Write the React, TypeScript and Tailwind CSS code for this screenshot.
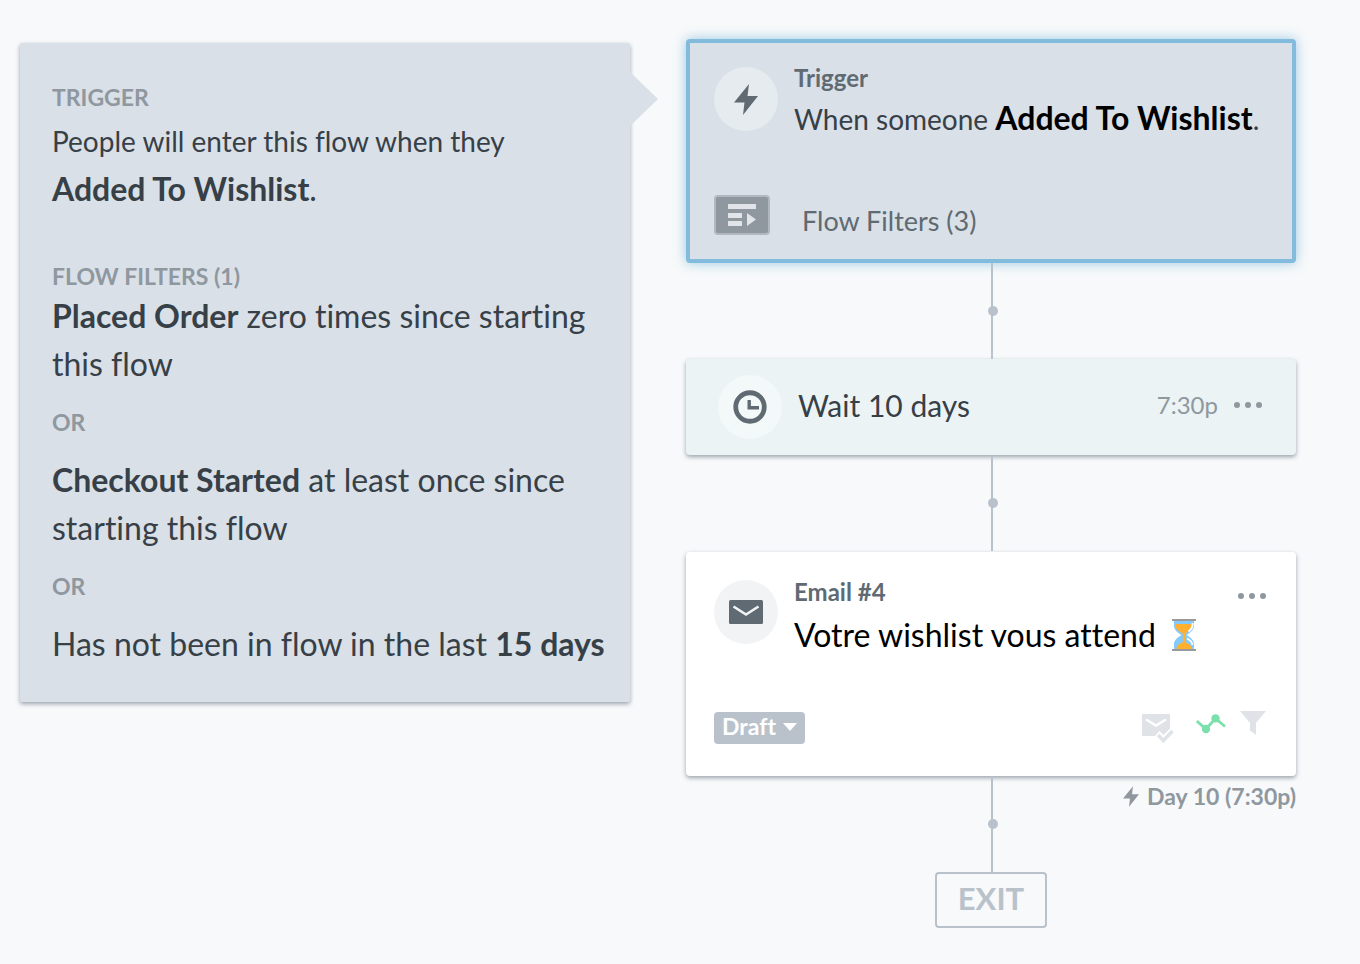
import type { ReactNode } from 'react';

function BoltIcon({ className }: { className: string }) {
  return (
    <svg viewBox="0 0 24 31" fill="currentColor" aria-hidden="true" className={className}>
      <path d="M15 0 0 18.500h10.500L9 31 24 12H13.500z" />
    </svg>
  );
}

function ClockIcon() {
  return (
    <svg viewBox="0 0 34 34" fill="none" stroke="currentColor" aria-hidden="true" className="size-[34px]">
      <circle cx="17" cy="17" r="14.250" strokeWidth="4.800" />
      <path d="M16.200 10v7.800H26" strokeWidth="3.400" />
    </svg>
  );
}

function EnvelopeIcon() {
  return (
    <svg viewBox="0 0 34 24" aria-hidden="true" className="h-6 w-[34px]">
      <rect width="34" height="24" rx="1.500" fill="currentColor" />
      <path d="M4.500 6.500 17 14.500 29.500 6.500" fill="none" stroke="#f2f3f5" strokeWidth="2.600" />
    </svg>
  );
}

function FilterListIcon() {
  return (
    <svg viewBox="0 0 28 22" fill="#e1e5e9" aria-hidden="true" className="h-[22px] w-7">
      <path d="M0 0h28v5H0zM0 9h14v5H0zM0 17h14v5H0zM19 9l9 6.500-9 6.500z" />
    </svg>
  );
}

function SmartSendIcon() {
  return (
    <svg viewBox="0 0 32 29" aria-hidden="true" className="h-[29px] w-8">
      <path d="M0 0h28v14.500L21.500 21l-4-4-4.500 5H0z" fill="#dfe3e7" />
      <path d="M4 5.500 14 11.500 24 5.500" fill="none" stroke="#fff" strokeWidth="2.400" />
      <path d="m16 21 5.500 5.500L30.500 17" fill="none" stroke="#dfe3e7" strokeWidth="3.600" />
    </svg>
  );
}

function TrackingIcon() {
  return (
    <svg viewBox="0 0 30 20" aria-hidden="true" className="h-5 w-[30px]">
      <path d="M.8 7 10 15 19.500 4.500 29 12.500" fill="none" stroke="#7be0ab" strokeWidth="2.800" />
      <circle cx="10" cy="15" r="4.200" fill="#7be0ab" />
      <circle cx="19.500" cy="4.400" r="4.200" fill="#7be0ab" />
    </svg>
  );
}

function FunnelIcon() {
  return (
    <svg viewBox="0 0 26 24" fill="#dfe3e7" aria-hidden="true" className="h-6 w-[26px]">
      <path d="M0 0h26L16 12v12l-6-4.500V12z" />
    </svg>
  );
}

function Hourglass() {
  return (
    <svg viewBox="0 0 24 32" role="img" aria-label="hourglass" className="h-8 w-6">
      <path d="M2 1h20v6c0 4-4 7-7.500 9 3.500 2 7.500 5 7.500 9v6H2v-6c0-4 4-7 7.500-9C6 14 2 11 2 7z" fill="#83caff" />
      <path d="M3.500 5h16c.5 4.500-2.500 7.500-6.200 9.500v9c3 .5 5.700 2.500 6.200 5.500v1h-15c0-3.500 3-6 6.300-6.500v-9C6.500 12.500 3 9.500 3.500 5z" fill="#ffb02e" />
      <path d="M20.500 4v2.500c0 2.500-2 4.500-4 6" fill="none" stroke="#fff" strokeWidth="1.800" />
      <path d="M15 19.500c3 1.500 5 3.500 5.500 6.500" fill="none" stroke="#fff" strokeWidth="1.800" />
      <path d="M0 0h24v2H0zM0 30h24v2H0z" fill="#999" />
    </svg>
  );
}

function MoreButton({ label, className }: { label: string; className?: string }) {
  return (
    <button type="button" aria-label={label} className={`cursor-pointer text-[#8f979f] ${className ?? ''}`}>
      <svg viewBox="0 0 28 6" fill="currentColor" className="h-[6px] w-7">
        <circle cx="3" cy="3" r="3" />
        <circle cx="14" cy="3" r="3" />
        <circle cx="25" cy="3" r="3" />
      </svg>
    </button>
  );
}

function IconCircle({ className, children }: { className: string; children: ReactNode }) {
  return (
    <div className={`flex size-16 shrink-0 items-center justify-center rounded-full text-[#606a72] ${className}`}>
      {children}
    </div>
  );
}

function Connector({ children }: { children?: ReactNode }) {
  return (
    <div className="grid h-24 grid-cols-[1fr_2px_1fr] pl-[2px]">
      <div />
      <div className="relative bg-[#b9c2ca]">
        <span className="absolute -left-[3px] top-[43px] size-[10px] rounded-full bg-[#b9c2ca]" />
      </div>
      <div>{children}</div>
    </div>
  );
}

function Label({ children }: { children: ReactNode }) {
  return <h2 className="text-[23px] font-bold leading-8 text-[#8f979f]">{children}</h2>;
}

function Strong({ className, children }: { className?: string; children: ReactNode }) {
  return <strong className={`text-[32px] leading-none ${className ?? ''}`}>{children}</strong>;
}

function Or() {
  return (
    <div className="py-[18px]">
      <Label>OR</Label>
    </div>
  );
}

function TriggerDetails() {
  return (
    <aside className="relative mt-1 rounded-[2px] bg-[#d9e0e7] pb-[34px] pl-8 pr-5 pt-[38px] text-[32px] leading-[48px] text-[#373f47] shadow-[0_2px_4px_rgba(80,95,110,0.55)]">
      <div className="absolute left-full top-[29px] size-0 border-y-[27px] border-l-[28px] border-y-transparent border-l-[#d9e0e7]" />
      <Label>TRIGGER</Label>
      <p className="mt-1 text-[28px] leading-[48px]">People will enter this flow when they</p>
      <p className="mb-[47px]">
        <Strong>Added To Wishlist</Strong>.
      </p>
      <Label>FLOW FILTERS (1)</Label>
      <p>
        <Strong>Placed Order</Strong> zero times since starting this flow
      </p>
      <Or />
      <p>
        <Strong>Checkout Started</Strong> at least once since starting this flow
      </p>
      <Or />
      <p>
        Has not been in flow in the last <Strong>15 days</Strong>
      </p>
    </aside>
  );
}

function TriggerCard() {
  return (
    <section className="rounded-[4px] border-4 border-[#83bbdd] bg-[#d9e0e7] p-6 shadow-[0_0_12px_rgba(131,187,221,0.8)]">
      <div className="flex gap-4">
        <IconCircle className="bg-[#e5ebef]">
          <BoltIcon className="h-[31px] w-6" />
        </IconCircle>
        <div>
          <h2 className="text-[24px] font-bold leading-[22px] text-[#606a72]">Trigger</h2>
          <p className="mt-[10px] text-[28px] leading-10 text-[#373f47]">
            When someone <Strong className="text-black">Added To Wishlist</Strong>.
          </p>
        </div>
      </div>
      <div className="mt-14 flex gap-8">
        <div className="flex h-10 w-14 items-center justify-center rounded-[4px] border-2 border-[#b0b8c0] bg-[#8f979f]">
          <FilterListIcon />
        </div>
        <p className="-mb-2 pt-1 text-[27px] leading-[44px] text-[#606a72]">Flow Filters (3)</p>
      </div>
    </section>
  );
}

function WaitCard() {
  return (
    <section className="flex items-center gap-4 rounded-[4px] bg-[#ebf3f4] py-4 pl-8 pr-[34px] shadow-[0_2px_4px_rgba(80,95,110,0.55)]">
      <IconCircle className="bg-[#f3f8f8]">
        <ClockIcon />
      </IconCircle>
      <div className="flex grow items-center gap-4 pb-1">
        <p className="grow text-[30px] leading-[48px] text-[#373f47]">Wait 10 days</p>
        <span className="text-[24px] leading-8 text-[#8f979f]">7:30p</span>
        <MoreButton label="Delay options" />
      </div>
    </section>
  );
}

function EmailCard() {
  return (
    <section className="mt-px rounded-[4px] bg-white px-7 pb-8 pt-7 shadow-[0_2px_4px_rgba(80,95,110,0.55)]">
      <div className="flex gap-4">
        <IconCircle className="bg-[#f2f3f5]">
          <EnvelopeIcon />
        </IconCircle>
        <div className="grow">
          <div className="flex h-7 items-start justify-between pr-[2px]">
            <h2 className="text-[24px] font-bold leading-6 text-[#606a72]">Email #4</h2>
            <MoreButton label="Email options" className="pt-[13px]" />
          </div>
          <p className="mt-[7px] flex items-center gap-4 text-[32px] leading-10 text-black">
            Votre wishlist vous attend <Hourglass />
          </p>
        </div>
      </div>
      <div className="mt-[54px] flex items-start justify-between">
        <div className="relative mt-[3px]">
          <select
            aria-label="Email status"
            className="h-8 w-[91px] cursor-pointer appearance-none rounded-[4px] bg-[#b9c2ca] pb-1 pl-2 text-[23px] font-bold leading-7 text-white"
          >
            <option>Draft</option>
            <option>Manual</option>
            <option>Live</option>
          </select>
          <svg viewBox="0 0 14 8" fill="#fff" aria-hidden="true" className="pointer-events-none absolute right-2 top-[11px] h-2 w-[14px]">
            <path d="M0 0h14L7 8z" />
          </svg>
        </div>
        <div className="flex items-start">
          <button type="button" aria-label="Smart sending" className="mr-[22px] mt-[5px] cursor-pointer">
            <SmartSendIcon />
          </button>
          <button type="button" aria-label="Tracking" className="mr-[14px] mt-[5px] cursor-pointer">
            <TrackingIcon />
          </button>
          <button type="button" aria-label="Additional filters" className="mr-[2px] mt-[2px] cursor-pointer">
            <FunnelIcon />
          </button>
        </div>
      </div>
    </section>
  );
}

export default function App() {
  return (
    <main className="min-h-screen bg-[#f7f9fa] font-['Lato','Open_Sans',sans-serif] [font-variant-ligatures:none]">
      <div className="grid grid-cols-2 items-start gap-14 pb-9 pl-5 pr-16 pt-[39px]">
        <TriggerDetails />
        <div>
          <TriggerCard />
          <Connector />
          <WaitCard />
          <Connector />
          <EmailCard />
          <Connector>
            <p className="flex items-center justify-end gap-2 pt-1 text-[23px] font-bold leading-8 text-[#8f979f]">
              <BoltIcon className="h-[21px] w-4" />
              Day 10 (7:30p)
            </p>
          </Connector>
          <div className="mx-auto flex h-14 w-28 items-center justify-center rounded-[4px] border-2 border-[#b9c2ca] pb-1 text-[31px] font-bold leading-8 text-[#b9c2ca]">
            EXIT
          </div>
        </div>
      </div>
    </main>
  );
}
